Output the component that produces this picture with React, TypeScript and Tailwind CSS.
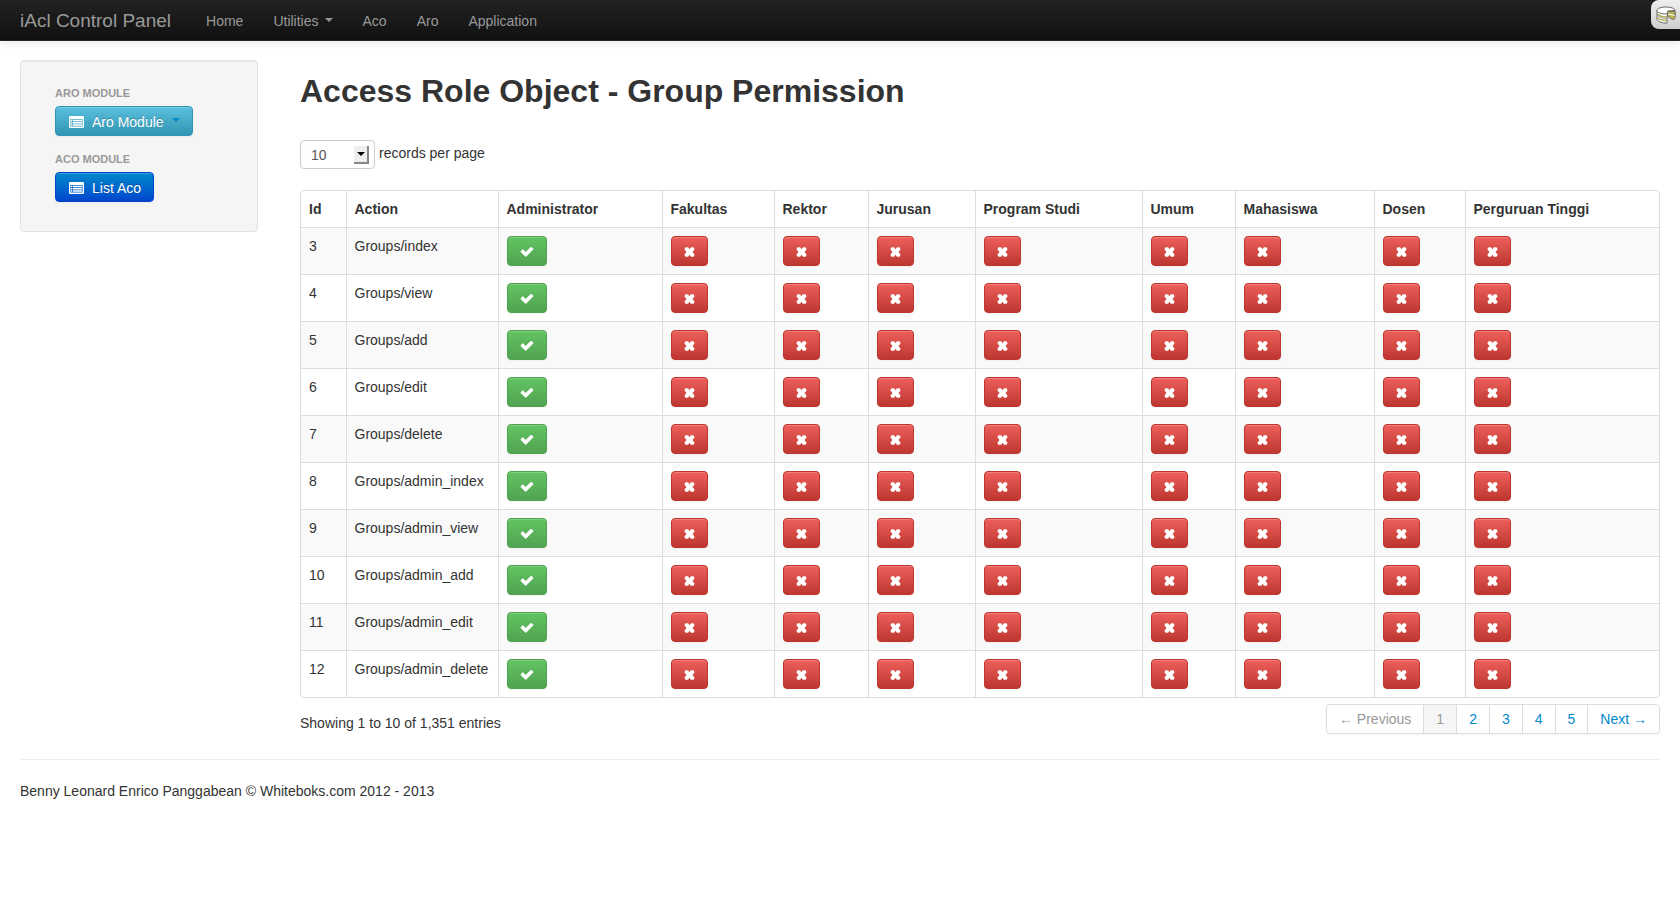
import React from 'react';

const columns = [
  { name: 'Id', width: 'w-[45px]' },
  { name: 'Action', width: 'w-[152px]' },
  { name: 'Administrator', width: 'w-[164px]' },
  { name: 'Fakultas', width: 'w-[112px]' },
  { name: 'Rektor', width: 'w-[94px]' },
  { name: 'Jurusan', width: 'w-[107px]' },
  { name: 'Program Studi', width: 'w-[167px]' },
  { name: 'Umum', width: 'w-[93px]' },
  { name: 'Mahasiswa', width: 'w-[139px]' },
  { name: 'Dosen', width: 'w-[91px]' },
  { name: 'Perguruan Tinggi', width: 'w-[194px]' },
];

const actions = [
  { id: 3, action: 'Groups/index' },
  { id: 4, action: 'Groups/view' },
  { id: 5, action: 'Groups/add' },
  { id: 6, action: 'Groups/edit' },
  { id: 7, action: 'Groups/delete' },
  { id: 8, action: 'Groups/admin_index' },
  { id: 9, action: 'Groups/admin_view' },
  { id: 10, action: 'Groups/admin_add' },
  { id: 11, action: 'Groups/admin_edit' },
  { id: 12, action: 'Groups/admin_delete' },
];

const btn =
  'h-[30px] items-center rounded border px-3 pt-0.5 text-sm leading-5 text-white shadow-[inset_0_1px_0_rgba(255,255,255,0.2),0_1px_2px_rgba(0,0,0,0.05)] [text-shadow:0_-1px_0_rgba(0,0,0,0.25)]';

function CheckIcon() {
  return (
    <svg viewBox="0 0 14 10" className="h-2.5 w-3.5" fill="currentColor" aria-hidden="true">
      <path d="M13.200 2.600L6.500 9.300q-.8.8-1.600 0L.9 5.300q-.7-.7 0-1.400L2.100 2.700q.7-.7 1.400 0l2.200 2.200L10.400.3q.7-.6 1.400 0L13.200 1.600q.5.500 0 1z" />
    </svg>
  );
}

function RemoveIcon() {
  return (
    <svg viewBox="0 0 11 10" className="h-2.5 w-[11px]" fill="currentColor" aria-hidden="true">
      <path d="M1.900.2h1.700q.4 0 .7.400L5.500 2.200 6.700.6q.3-.4.7-.4h1.700q.4 0 .6.300l.7 1.200q.3.500-.1 1L8.500 5l1.800 2.300q.4.500.1 1l-.7 1.200q-.2.300-.6.300H7.400q-.4 0-.7-.4L5.500 7.800 4.300 9.400q-.3.400-.7.400H1.900q-.4 0-.6-.3L.6 8.300q-.3-.5.1-1L2.500 5 .7 2.700q-.4-.5-.1-1L1.300.5q.2-.3.600-.3z" />
    </svg>
  );
}

function ListIcon() {
  return (
    <svg viewBox="0 0 15 12" className="mr-2 ml-px h-3 w-[15px]" fill="currentColor" aria-hidden="true">
      <path
        fillRule="evenodd"
        d="M1.300 0h12.400Q15 0 15 1.300v9.400q0 1.300-1.300 1.300H1.300Q0 12 0 10.700V1.300Q0 0 1.300 0zM1.400 3v7.600h12.200V3z"
      />
      <path d="M2 3.700h1.300v1.500H2zM4 3.700h9v1.500H4zM2 6h1.300v1.500H2zM4 6h9v1.500H4zM2 8.300h1.300v1.500H2zM4 8.300h9v1.500H4z" />
    </svg>
  );
}

function CakeIcon() {
  return (
    <svg viewBox="0 0 20 18" className="h-[18px] w-5" strokeLinejoin="round" aria-hidden="true">
      <path d="M1 4.500v9c1 2 5 3.800 10 3.500V9.500L19 11V4.500z" fill="#fff" stroke="#666" />
      <path d="M1.500 8c2 2.300 5.500 3 9.500 3M1.500 11.500c2 2.300 5.500 3 9.500 3" fill="none" stroke="#b5b253" strokeWidth="1.300" />
      <path d="M1.500 9.300c2 2.300 5.500 3 9.500 3" fill="none" stroke="#777" strokeWidth=".7" />
      <path d="M11.500 5.500L19 5v7.500l-2 1.300-5.500-3.500z" fill="#b5b253" stroke="#666" strokeWidth=".8" />
      <path d="M12.500 8l6 1.500" stroke="#fff" strokeWidth="1.200" />
      <path d="M1 4.500C1 2.500 5 1 10 1s9 1.500 9 3.500L12 5l-1 3C5 8 1 6.500 1 4.500z" fill="#fff" stroke="#666" />
    </svg>
  );
}

const navLink = 'px-[15px] py-[11px] hover:text-white';
const pageLink = 'block border-l border-[#ddd] px-3 leading-7';

export default function App() {
  return (
    <div className="min-h-screen bg-white font-['Liberation_Sans',Arial,sans-serif] text-sm leading-5 text-[#333]">
      <header className="relative flex h-[41px] items-start border-b border-[#252525] bg-linear-to-b from-[#222] to-[#111] px-5 text-[#999] shadow-[0_1px_10px_rgba(0,0,0,0.1)]">
        <a href="#" className="py-[11px] pr-5 text-[19px] leading-5">iAcl Control Panel</a>
        <nav className="flex">
          <a href="#home" className={navLink}>Home</a>
          <a href="#utilities" className={`${navLink} flex`}>
            Utilities
            <span className="mt-[7px] ml-1.5 h-1 border-x-4 border-t-4 border-x-transparent border-t-[#999]" />
          </a>
          <a href="#aco" className={navLink}>Aco</a>
          <a href="#aro" className={navLink}>Aro</a>
          <a href="#application" className={navLink}>Application</a>
        </nav>
        <button
          type="button"
          aria-label="Debug toolbar"
          className="absolute top-0 right-0 flex h-[29px] w-[29px] items-center justify-center rounded-l-lg bg-linear-to-b from-[#efefef] to-[#cfcfcf]"
        >
          <CakeIcon />
        </button>
      </header>

      <div className="mx-5 mt-[19px] flex items-start gap-[42px]">
        <aside className="h-[172px] w-[238px] shrink-0 rounded border border-[#e3e3e3] bg-[#f5f5f5] px-[34px] py-[22px] shadow-[inset_0_1px_1px_rgba(0,0,0,0.05)]">
          <h3 className="text-[11px] leading-5 font-bold text-[#999] uppercase">Aro Module</h3>
          <button type="button" className={`${btn} mt-[3px] flex border-[#2f96b4] bg-linear-to-b from-[#5bc0de] to-[#2f96b4]`}>
            <ListIcon />
            Aro Module
            <span className="mb-1 ml-2 h-1 border-x-4 border-t-4 border-x-transparent border-t-[#0088cc]" />
          </button>
          <h3 className="mt-[13px] text-[11px] leading-5 font-bold text-[#999] uppercase">Aco Module</h3>
          <button type="button" className={`${btn} mt-[3px] flex border-[#0044cc] bg-linear-to-b from-[#0088cc] to-[#0044cc]`}>
            <ListIcon />
            List Aco
          </button>
        </aside>

        <main className="min-w-0 flex-1">
          <h1 className="mt-[11px] text-[32px] leading-10 font-bold">Access Role Object - Group Permission</h1>

          <label className="mt-[29px] flex h-[30px] w-max gap-1">
            <span className="relative block">
              <select
                defaultValue="10"
                className="h-[29px] w-[75px] appearance-none rounded border border-[#ccc] bg-white pl-2.5 text-sm text-[#555]"
              >
                <option>10</option>
                <option>25</option>
                <option>50</option>
                <option>100</option>
              </select>
              <span className="pointer-events-none absolute top-1.5 right-1.5 flex h-[18px] w-[15px] items-center justify-center border-r-2 border-b-2 border-[#888] bg-[#eee]">
                <span className="border-x-4 border-t-4 border-x-transparent border-t-black" />
              </span>
            </span>
            <span className="pt-[3px]">records per page</span>
          </label>

          <div className="mt-5 overflow-hidden rounded border border-[#ddd]">
            <table className="w-full table-fixed border-collapse">
              <colgroup>
                {columns.map((column) => (
                  <col key={column.name} className={column.width} />
                ))}
              </colgroup>
              <thead>
                <tr>
                  {columns.map((column) => (
                    <th key={column.name} className="border-l border-[#ddd] p-2 text-left font-bold first:border-l-0">
                      {column.name}
                    </th>
                  ))}
                </tr>
              </thead>
              <tbody>
                {actions.map((row) => (
                  <tr key={row.id} className="border-t border-[#ddd] odd:bg-[#f9f9f9]">
                    <td className="p-2 align-top">{row.id}</td>
                    <td className="border-l border-[#ddd] p-2 align-top whitespace-nowrap">{row.action}</td>
                    {columns.slice(2).map((column, index) => (
                      <td key={column.name} className="border-l border-[#ddd] p-2 align-top">
                        {index === 0 ? (
                          <button
                            type="button"
                            aria-label={`Deny ${column.name} ${row.action}`}
                            className={`${btn} flex border-[#51a351] bg-linear-to-b from-[#62c462] to-[#51a351]`}
                          >
                            <CheckIcon />
                          </button>
                        ) : (
                          <button
                            type="button"
                            aria-label={`Allow ${column.name} ${row.action}`}
                            className={`${btn} flex border-[#bd362f] bg-linear-to-b from-[#ee5f5b] to-[#bd362f]`}
                          >
                            <RemoveIcon />
                          </button>
                        )}
                      </td>
                    ))}
                  </tr>
                ))}
              </tbody>
            </table>
          </div>

          <div className="mt-1.5 flex items-start justify-between">
            <p className="pt-[9px]">Showing 1 to 10 of 1,351 entries</p>
            <nav aria-label="Pages" className="flex overflow-hidden rounded border border-[#ddd] text-[#08c] shadow-[0_1px_2px_rgba(0,0,0,0.05)]">
              <a href="#prev" className={`${pageLink} border-l-0 text-[#999]`}>← Previous</a>
              <a href="#1" className={`${pageLink} bg-[#f5f5f5] text-[#999]`}>1</a>
              <a href="#2" className={pageLink}>2</a>
              <a href="#3" className={pageLink}>3</a>
              <a href="#4" className={pageLink}>4</a>
              <a href="#5" className={pageLink}>5</a>
              <a href="#next" className={pageLink}>Next →</a>
            </nav>
          </div>
        </main>
      </div>

      <footer className="mx-5 mt-[25px] border-t border-[#eee] pt-[21px]">
        <p>Benny Leonard Enrico Panggabean © Whiteboks.com 2012 - 2013</p>
      </footer>
    </div>
  );
}
